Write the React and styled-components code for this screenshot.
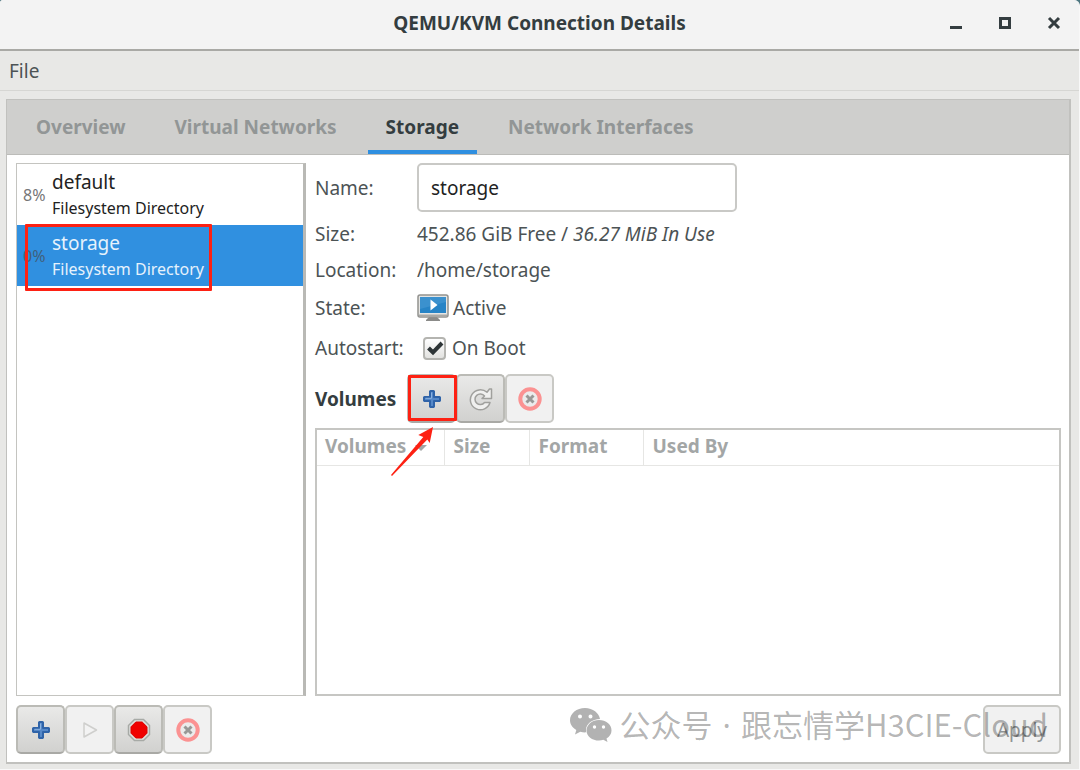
import React, { useState } from 'react';
import styled, { createGlobalStyle, css } from 'styled-components';

const GlobalStyle = createGlobalStyle`
    * {
        box-sizing: border-box;
    }

    html {
        background: #4d7680;
    }

    body {
        margin: 0;
        color: #4c5355;
        font-family: "Noto Sans", "Open Sans", sans-serif;
        font-size: 19px;
        line-height: 24px;
    }

    button, input {
        font: inherit;
        color: inherit;
    }
`

const Window = styled.div`
    position: relative;
    display: flex;
    flex-direction: column;
    min-height: 100vh;
    background: #e8e8e6;
    border-right: 1px solid #f8f8f8;
    border-bottom: 1px solid #f8f8f8;
    border-radius: 3px 6px 0 0;
    overflow: hidden;
`

const TitleBar = styled.header`
    display: grid;
    grid-template-columns: 1fr auto 1fr;
    align-items: center;
    height: 51px;
    padding: 0 16px 4px;
    background: #f3f3f3;
    border-bottom: 2px solid #a9a9a5;

    h1 {
        grid-column: 2;
        margin: 0;
        color: #343d40;
        font-size: 19px;
        line-height: 24px;
    }
`

const WindowButtons = styled.div`
    display: flex;
    justify-content: flex-end;
    gap: 31px;

    button {
        display: flex;
        padding: 0;
        border: 0;
        background: none;
        color: #343d40;
    }
`

const MenuBar = styled.nav`
    height: 40px;
    padding: 8px 9px;
    border-bottom: 1px solid #d6d6d3;

    button {
        display: block;
        padding: 0;
        border: 0;
        background: none;
    }
`

const Notebook = styled.main`
    display: flex;
    flex: 1;
    flex-direction: column;
    margin: 8px 8px 5px 6px;
    border: 2px solid #c1c1be;
    border-width: 1px 2px 2px 1px;
    background: #fff;
`

const Tabs = styled.div`
    display: flex;
    gap: 13px;
    height: 55px;
    padding: 0 11px;
    background: #cfcfcd;
    border-bottom: 1px solid #bcbcb9;
`

const Tab = styled.button`
    padding: 3px 18px 0;
    border: 0;
    border-bottom: 4px solid ${p => p.$active ? '#2f8fe0' : 'transparent'};
    background: none;
    color: ${p => p.$active ? '#343d40' : '#929696'};
    font-weight: bold;
`

const Page = styled.div`
    display: grid;
    flex: 1;
    grid-template-columns: 290px 1fr;
    grid-template-rows: 1fr auto;
    gap: 9px;
    padding: 8px 8px 8px 9px;
`

const PoolList = styled.ul`
    margin: 0;
    padding: 0;
    list-style: none;
    border: 1px solid #c4c4c0;
    border-right: 3px solid #b9b9b5;
    background: #fff;
`

const PoolItem = styled.li`
    position: relative;
    display: flex;
    align-items: center;
    gap: 5px;
    height: 61px;
    padding-left: 6px;
    color: ${p => p.$selected ? '#e6f2fc' : '#222'};
    background: ${p => p.$selected ? '#3090e0' : '#fff'};
`

const Percent = styled.span`
    width: 24px;
    color: ${p => p.$selected ? '#40607c' : '#777'};
    font-size: 16px;
    white-space: nowrap;
`

const PoolName = styled.div`
    display: flex;
    flex-direction: column;
    line-height: 26px;

    small {
        font-size: 16px;
    }
`

const mark = css`
    position: absolute;
    border: 3px solid #fd2113;
    border-radius: 1px;
    pointer-events: none;
`

const ItemMark = styled.span`
    ${mark}
    top: -1px;
    left: 8px;
    width: 187px;
    height: 67px;
    z-index: 1;
`

const ButtonMark = styled.span`
    ${mark}
    inset: -1px -3px 0 -1px;
    z-index: 1;
`

const Details = styled.section`
    display: flex;
    flex-direction: column;
    min-width: 0;
`

const Form = styled.div`
    display: grid;
    grid-template-columns: 102px 1fr;
    grid-template-rows: 49px 43px 30px 46px 34px;
    align-items: center;
`

const Value = styled.div`
    display: flex;
    align-items: center;
    gap: 4px;
    white-space: pre;
`

const NameInput = styled.input`
    width: 320px;
    height: 49px;
    padding: 0 12px;
    color: #222;
    background: #fff;
    border: 2px solid #c9c9c6;
    border-radius: 5px;
    outline: none;
`

const BootLabel = styled.label`
    display: flex;
    align-items: center;
    gap: 6px;
    padding-left: 6px;
`

const CheckBox = styled.span`
    position: relative;
    display: flex;
    width: 23px;
    height: 23px;
    background: linear-gradient(#fff, #e2e2e0);
    border: 2px solid #b4b4b0;
    border-radius: 4px;

    input {
        position: absolute;
        inset: 0;
        margin: 0;
        opacity: 0;
    }

    svg {
        visibility: hidden;
    }

    input:checked + svg {
        visibility: visible;
    }
`

const VolumeBar = styled.div`
    display: flex;
    align-items: center;
    gap: 11px;
    margin: 9px 0 5px;

    h2 {
        margin: 0;
        color: #343d40;
        font-size: 19px;
        line-height: 24px;
    }
`

const Buttons = styled.div`
    display: flex;
`

const ToolButton = styled.button`
    position: relative;
    display: flex;
    align-items: center;
    justify-content: center;
    min-width: 49px;
    height: 49px;
    padding: 0 ${p => p.$wide ? '12px' : '0'};
    background: linear-gradient(#e9e9e8, #d1d1cf);
    border: 2px solid #bbbbb6;
    border-bottom-color: #a9a9a5;
    border-radius: 5px;

    &:disabled {
        color: #8f9394;
        background: #f1f1f1;
        border-color: #c9c9c5;
    }
`

const Arrow = styled.svg`
    position: absolute;
    top: 50px;
    left: -20px;
    z-index: 2;
    pointer-events: none;
`

const VolumeFrame = styled.div`
    flex: 1;
    border: 2px solid #c6c6c3;
    background: #fff;
`

const VolumeTable = styled.table`
    width: 100%;
    border-collapse: collapse;
    table-layout: fixed;

    th {
        height: 35px;
        padding: 0 9px 2px;
        color: #a3a6a6;
        text-align: left;
        white-space: nowrap;
        border-right: 1px solid #e6e6e4;
        border-bottom: 1px solid #e6e6e4;
    }

    th:first-child {
        padding: 0 8px 2px;
    }

    th:last-child {
        border-right: 0;
    }

    svg {
        margin-left: 9px;
        vertical-align: middle;
    }
`

const Footer = styled.footer`
    display: flex;
    grid-column: 1 / -1;
    justify-content: space-between;
`

const Watermark = styled.div`
    position: absolute;
    right: 31px;
    bottom: 22px;
    display: flex;
    align-items: center;
    gap: 8px;
    color: rgba(0, 0, 0, 0.3);
    font-family: "Noto Sans CJK SC", sans-serif;
    font-size: 31px;
    line-height: 44px;
    white-space: nowrap;
    pointer-events: none;
`

const Dot = styled.span`
    margin: 0 2px;
    font-family: "Noto Sans", sans-serif;
`

const PlusIcon = () => (
    <svg width="18" height="18" viewBox="0 0 18 18">
        <path d="M7.500 1h3l.5.5V7h5.500l.5.5v3l-.5.5H11v5.500l-.5.5h-3l-.5-.5V11H1.500l-.5-.5v-3l.5-.5H7V1.500z" fill="#5588c8" stroke="#2f63a8" strokeWidth="2" strokeLinejoin="round" />
        <path d="M8.500 2.500v5.800H2.500" fill="none" stroke="#8db3e0" />
    </svg>
)

const RefreshIcon = () => (
    <svg width="24" height="24" viewBox="0 0 24 24" fill="none">
        <path d="M22.500 2v9.500H13l2.500-2.500A5.300 5.300 0 1 0 15.500 15.500H21A10 10 0 1 1 18 5.300L20.500 2z" fill="#f0f0ef" stroke="#a0a09d" strokeWidth="1.500" strokeLinejoin="round" />
    </svg>
)

const DeleteIcon = () => (
    <svg width="24" height="24" viewBox="0 0 24 24">
        <circle cx="12" cy="12" r="9.7" fill="#ebebeb" stroke="#fb9292" strokeWidth="4" />
        <path d="m8.500 8.500 7 7m0-7-7 7" stroke="#989896" strokeWidth="3" />
    </svg>
)

const PlayIcon = () => (
    <svg width="16" height="18" viewBox="0 0 16 18">
        <path d="M2 2v14l12.500-7z" fill="#f3f3f3" stroke="#cfcfcd" strokeWidth="1.500" strokeLinejoin="round" />
    </svg>
)

const StopIcon = () => (
    <svg width="24" height="24" viewBox="0 0 24 24">
        <path d="M7.500 1.500h9l6 6v9l-6 6h-9l-6-6v-9z" fill="#dfe1df" stroke="#a7aaa6" strokeWidth="1.500" />
        <path d="M8.800 4h6.400L20 8.800v6.400L15.200 20H8.800L4 15.200V8.800z" fill="#f00000" stroke="#dc0000" />
    </svg>
)

const MonitorIcon = () => (
    <svg width="32" height="28" viewBox="0 0 32 28">
        <path d="M12 23h8l3 3v1H9v-1z" fill="#8b8b89" />
        <rect x="1" y="1" width="30" height="22" rx="2" fill="#e5e5e3" stroke="#92928f" strokeWidth="1.500" />
        <path d="M2 21.500h28" stroke="#a9a9a6" strokeWidth="2" />
        <rect x="3" y="3" width="26" height="16" fill="#2784c6" />
        <path d="M3 3h26v5L3 15z" fill="#3b91ce" />
        <path d="m13.500 5.500 7 5.500-7 5.500z" fill="#fff" />
    </svg>
)

const WechatIcon = () => (
    <svg width="42" height="34" viewBox="0 0 42 34">
        <path fillRule="evenodd" fill="#b2b2b2" d="M15 0C23 0 29 5 30 11 22 11 16 16 16 22c0 1 0 1.500.3 2.300-2 .2-4 0-6-.6L5 26.500 6.300 22C2.500 19.800 0 16.300 0 12.300 0 5.500 6.700 0 15 0zM10 6.500a2 2 0 1 0 0 4 2 2 0 0 0 0-4zm10.500 0a2 2 0 1 0 0 4 2 2 0 0 0 0-4z" />
        <path fillRule="evenodd" fill="#b2b2b2" d="M29 12c7 0 12.500 4.700 12.500 10.400 0 3.400-2 6.200-5 8.200l1 3.400-4.200-2.200c-1.300.4-2.700.7-4.300.7-7 0-12.500-4.500-12.500-10.100S22 12 29 12zm-4.500 5.300a1.700 1.700 0 1 0 0 3.400 1.700 1.700 0 0 0 0-3.400zm9 0a1.700 1.700 0 1 0 0 3.400 1.700 1.700 0 0 0 0-3.400z" />
    </svg>
)

const tabs = ['Overview', 'Virtual Networks', 'Storage', 'Network Interfaces'];

const pools = [
    { name: 'default', type: 'Filesystem Directory', used: '8%' },
    { name: 'storage', type: 'Filesystem Directory', used: '0%' },
];

const App = () => {

    const [tab, setTab] = useState('Storage');
    const [name, setName] = useState('storage');
    const [autostart, setAutostart] = useState(true);

    return (
        <Window>
            <GlobalStyle />
            <TitleBar>
                <h1>QEMU/KVM Connection Details</h1>
                <WindowButtons>
                    <button aria-label="Minimize">
                        <svg width="18" height="18" viewBox="0 0 18 18"><path d="M3 13.500h12" stroke="currentColor" strokeWidth="3" /></svg>
                    </button>
                    <button aria-label="Maximize">
                        <svg width="18" height="18" viewBox="0 0 18 18"><path d="M4.500 4.500h9v9h-9z" fill="none" stroke="currentColor" strokeWidth="3" /></svg>
                    </button>
                    <button aria-label="Close">
                        <svg width="18" height="18" viewBox="0 0 18 18"><path d="m4 4 10 10m0-10L4 14" stroke="currentColor" strokeWidth="3" /></svg>
                    </button>
                </WindowButtons>
            </TitleBar>

            <MenuBar>
                <button>File</button>
            </MenuBar>

            <Notebook>
                <Tabs role="tablist">
                    {tabs.map(t => (
                        <Tab key={t} role="tab" aria-selected={t === tab} $active={t === tab} onClick={() => setTab(t)}>{t}</Tab>
                    ))}
                </Tabs>

                <Page>
                    <PoolList>
                        {pools.map(pool => {
                            const selected = pool.name === 'storage';
                            return (
                                <PoolItem key={pool.name} $selected={selected}>
                                    <Percent $selected={selected}>{pool.used}</Percent>
                                    <PoolName>
                                        {pool.name}
                                        <small>{pool.type}</small>
                                    </PoolName>
                                    {selected && <ItemMark />}
                                </PoolItem>
                            )
                        })}
                    </PoolList>

                    <Details>
                        <Form>
                            <label htmlFor="name">Name:</label>
                            <NameInput id="name" value={name} onChange={e => setName(e.target.value)} />
                            <span>Size:</span>
                            <Value><span>452.86 GiB Free / <i>36.27 MiB In Use</i></span></Value>
                            <span>Location:</span>
                            <Value>/home/storage</Value>
                            <span>State:</span>
                            <Value><MonitorIcon />Active</Value>
                            <span>Autostart:</span>
                            <BootLabel>
                                <CheckBox>
                                    <input type="checkbox" checked={autostart} onChange={e => setAutostart(e.target.checked)} />
                                    <svg width="19" height="19" viewBox="0 0 19 19"><path d="m3.500 9 4.500 4.500L17 4" fill="none" stroke="#2e3537" strokeWidth="4" /></svg>
                                </CheckBox>
                                On Boot
                            </BootLabel>
                        </Form>

                        <VolumeBar>
                            <h2>Volumes</h2>
                            <Buttons>
                                <ToolButton aria-label="New volume">
                                    <PlusIcon />
                                    <ButtonMark />
                                    <Arrow width="48" height="54" viewBox="0 0 48 54">
                                        <path d="M44 1 40.700 17l-2.400-3.500L3 50l-1-1L34.300 11l-5-2z" fill="#fd2113" />
                                    </Arrow>
                                </ToolButton>
                                <ToolButton aria-label="Refresh volume list"><RefreshIcon /></ToolButton>
                                <ToolButton aria-label="Delete volume" disabled><DeleteIcon /></ToolButton>
                            </Buttons>
                        </VolumeBar>

                        <VolumeFrame>
                            <VolumeTable>
                                <colgroup>
                                    <col width="127" />
                                    <col width="85" />
                                    <col width="114" />
                                    <col />
                                </colgroup>
                                <thead>
                                    <tr>
                                        <th>Volumes<svg width="12" height="8" viewBox="0 0 12 8"><path d="M0 1h12L6 7z" fill="#a3a6a6" /></svg></th>
                                        <th>Size</th>
                                        <th>Format</th>
                                        <th>Used By</th>
                                    </tr>
                                </thead>
                            </VolumeTable>
                        </VolumeFrame>
                    </Details>

                    <Footer>
                        <Buttons>
                            <ToolButton aria-label="Add pool"><PlusIcon /></ToolButton>
                            <ToolButton aria-label="Start pool" disabled><PlayIcon /></ToolButton>
                            <ToolButton aria-label="Stop pool"><StopIcon /></ToolButton>
                            <ToolButton aria-label="Delete pool" disabled><DeleteIcon /></ToolButton>
                        </Buttons>
                        <ToolButton $wide disabled>Apply</ToolButton>
                    </Footer>
                </Page>
            </Notebook>

            <Watermark>
                <WechatIcon />
                <span>公众号<Dot> · </Dot>跟忘情学H3CIE-Cloud</span>
            </Watermark>
        </Window>
    )
}

export default App;
